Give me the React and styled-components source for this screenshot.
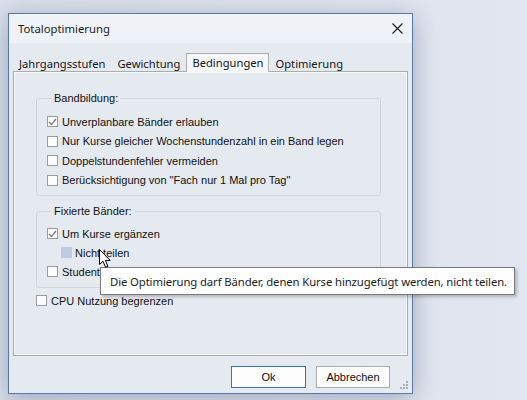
import React from 'react';
import styled, { createGlobalStyle } from 'styled-components';

const GlobalStyle = createGlobalStyle`
  html, body {
    margin: 0;
    padding: 0;
    background: #dfe4ee;
  }
  body {
    width: 527px;
    height: 400px;
    overflow: hidden;
  }
`;

const uiFont = `"Noto Sans", "Open Sans", sans-serif`;
const formFont = `"Liberation Sans", Arial, sans-serif`;

const Desktop = styled.div`
  position: relative;
  width: 527px;
  height: 400px;
  padding: 13px 0 0 8px;
  box-sizing: border-box;
  background: linear-gradient(90deg, #d9dfea 0%, #e1e6f0 100%);
`;

const Window = styled.div`
  width: 405px;
  height: 381px;
  box-sizing: border-box;
  border: 1px solid #5878ab;
  background: #e5e9f0;
  display: flex;
  flex-direction: column;
  box-shadow: 0 4px 22px rgba(40, 55, 90, 0.35);
`;

const TitleBar = styled.div`
  height: 29px;
  flex: none;
  display: flex;
  align-items: center;
  justify-content: space-between;
  padding: 0 0 0 9px;
  background: #eff3f8;
`;

const Title = styled.span`
  font-family: ${uiFont};
  font-size: 11.3px;
  color: #1b1b1b;
`;

const CloseButton = styled.div`
  width: 30px;
  height: 29px;
  display: flex;
  align-items: center;
  justify-content: center;
`;

const Body = styled.div`
  flex: 1;
  display: flex;
  flex-direction: column;
  padding: 10px 4px 0 4px;
  position: relative;
`;

const TabStrip = styled.div`
  display: flex;
  align-items: flex-end;
  height: 18px;
  position: relative;
  z-index: 1;
`;

const Tab = styled.div`
  font-family: ${uiFont};
  font-size: 11.2px;
  color: #161616;
  height: ${p => (p.$active ? '19px' : '17px')};
  line-height: ${p => (p.$active ? '18px' : '17px')};
  padding: 0 5px;
  box-sizing: border-box;
  margin-bottom: ${p => (p.$active ? '-1px' : '0')};
  background: ${p => (p.$active ? '#f4f6f9' : 'transparent')};
  border: 1px solid ${p => (p.$active ? '#acacac' : 'transparent')};
  border-bottom: none;
  white-space: nowrap;
`;

const TabPanel = styled.div`
  height: 285px;
  box-sizing: border-box;
  border: 1px solid #acacac;
  box-shadow: inset 0 0 0 1px #f7f8fa;
  padding: 19px 26px 0 22px;
  display: flex;
  flex-direction: column;
`;

const Group = styled.fieldset`
  margin: 0 0 ${p => p.$gap || 0}px 0;
  padding: ${p => p.$top}px 0 ${p => p.$bottom}px 10px;
  border: 1px solid #d2d6dc;
  border-radius: 3px;
  min-width: 0;
`;

const Legend = styled.legend`
  font-family: ${formFont};
  font-size: 11px;
  line-height: 14px;
  color: #111;
  padding: 0 2px;
  margin-left: 5px;
`;

const CheckRow = styled.label`
  display: flex;
  align-items: center;
  height: ${p => p.$h || 19}px;
  padding-left: ${p => p.$indent || 0}px;
  font-family: ${formFont};
  font-size: 11px;
  color: #111;
  white-space: nowrap;
`;

const Box = styled.span`
  width: 11px;
  height: 11px;
  box-sizing: border-box;
  border: 1px solid #9c9c9c;
  background: #fdfdfd;
  margin-right: 4px;
  flex: none;
  display: flex;
  align-items: center;
  justify-content: center;
`;

const HotBox = styled.span`
  width: 11px;
  height: 11px;
  background: #bccbe3;
  margin-right: 3px;
  flex: none;
`;

const ButtonRow = styled.div`
  display: flex;
  justify-content: flex-end;
  gap: 10px;
  padding: 10px 18px 0 0;
`;

const DialogButton = styled.div`
  width: ${p => p.$w || 75}px;
  height: 22px;
  box-sizing: border-box;
  display: flex;
  align-items: center;
  justify-content: center;
  font-family: ${formFont};
  font-size: 11px;
  color: #111;
  background: #fdfdfd;
  border: 1px solid ${p => (p.$primary ? '#3f6fb4' : '#adadad')};
`;

const Grip = styled.svg`
  position: absolute;
  right: 2px;
  bottom: 2px;
`;

const Tooltip = styled.div`
  position: absolute;
  left: 100px;
  top: 267px;
  width: 415px;
  height: 28px;
  box-sizing: border-box;
  background: #fefefe;
  border: 1px solid #7a7a7a;
  box-shadow: 2px 2px 3px rgba(0, 0, 0, 0.22);
  font-family: ${uiFont};
  font-size: 11.3px;
  letter-spacing: -0.1px;
  color: #1c1c1c;
  display: flex;
  align-items: center;
  padding-left: 9px;
  white-space: nowrap;
`;

const Cursor = styled.svg`
  position: absolute;
  left: 99px;
  top: 249px;
`;

const Check = () => (
  <svg width="9" height="8" viewBox="0 0 9 8">
    <path d="M1 4 L3.5 6.5 L8 1" fill="none" stroke="#7d7d7d" strokeWidth="1.2" />
  </svg>
);

const Option = ({ checked, children, h }) => (
  <CheckRow $h={h}>
    <Box>{checked && <Check />}</Box>
    {children}
  </CheckRow>
);

const tabs = ['Jahrgangsstufen', 'Gewichtung', 'Bedingungen', 'Optimierung'];

export default function App() {
  return (
    <>
      <GlobalStyle />
      <Desktop>
        <Window>
          <TitleBar>
            <Title>Totaloptimierung</Title>
            <CloseButton>
              <svg width="11" height="11" viewBox="0 0 11 11">
                <path d="M0.5 0.5 L10.5 10.5 M10.5 0.5 L0.5 10.5" stroke="#1a1a1a" strokeWidth="1.1" />
              </svg>
            </CloseButton>
          </TitleBar>
          <Body>
            <TabStrip>
              {tabs.map(t => (
                <Tab key={t} $active={t === 'Bedingungen'}>{t}</Tab>
              ))}
            </TabStrip>
            <TabPanel>
              <Group $top={7} $bottom={5} $gap={8}>
                <Legend>Bandbildung:</Legend>
                <Option checked h={19.5}>Unverplanbare Bänder erlauben</Option>
                <Option h={19.5}>Nur Kurse gleicher Wochenstundenzahl in ein Band legen</Option>
                <Option h={19.5}>Doppelstundenfehler vermeiden</Option>
                <Option h={19.5}>Berücksichtigung von "Fach nur 1 Mal pro Tag"</Option>
              </Group>
              <Group $top={6} $bottom={6} $gap={3}>
                <Legend>Fixierte Bänder:</Legend>
                <Option checked>Um Kurse ergänzen</Option>
                <CheckRow $indent={14}>
                  <HotBox />
                  Nicht teilen
                </CheckRow>
                <Option>Studenten Kurs-Zuordnung nicht verändern</Option>
              </Group>
              <Option>CPU Nutzung begrenzen</Option>
            </TabPanel>
            <ButtonRow>
              <DialogButton $primary>Ok</DialogButton>
              <DialogButton $w={74}>Abbrechen</DialogButton>
            </ButtonRow>
            <Grip width="10" height="10" viewBox="0 0 10 10">
              <g fill="#a9aeb6">
                <rect x="6" y="0" width="2" height="2" />
                <rect x="3" y="3" width="2" height="2" />
                <rect x="6" y="3" width="2" height="2" />
                <rect x="0" y="6" width="2" height="2" />
                <rect x="3" y="6" width="2" height="2" />
                <rect x="6" y="6" width="2" height="2" />
              </g>
            </Grip>
          </Body>
        </Window>
        <Tooltip>Die Optimierung darf Bänder, denen Kurse hinzugefügt werden, nicht teilen.</Tooltip>
        <Cursor width="13" height="20" viewBox="0 0 13 20">
          <path
            d="M0.5 0.5 L0.5 15.5 L4 12.2 L6.6 18.3 L8.9 17.3 L6.4 11.4 L11.2 11.4 Z"
            fill="#fff"
            stroke="#000"
            strokeWidth="1"
            strokeLinejoin="round"
          />
        </Cursor>
      </Desktop>
    </>
  );
}
